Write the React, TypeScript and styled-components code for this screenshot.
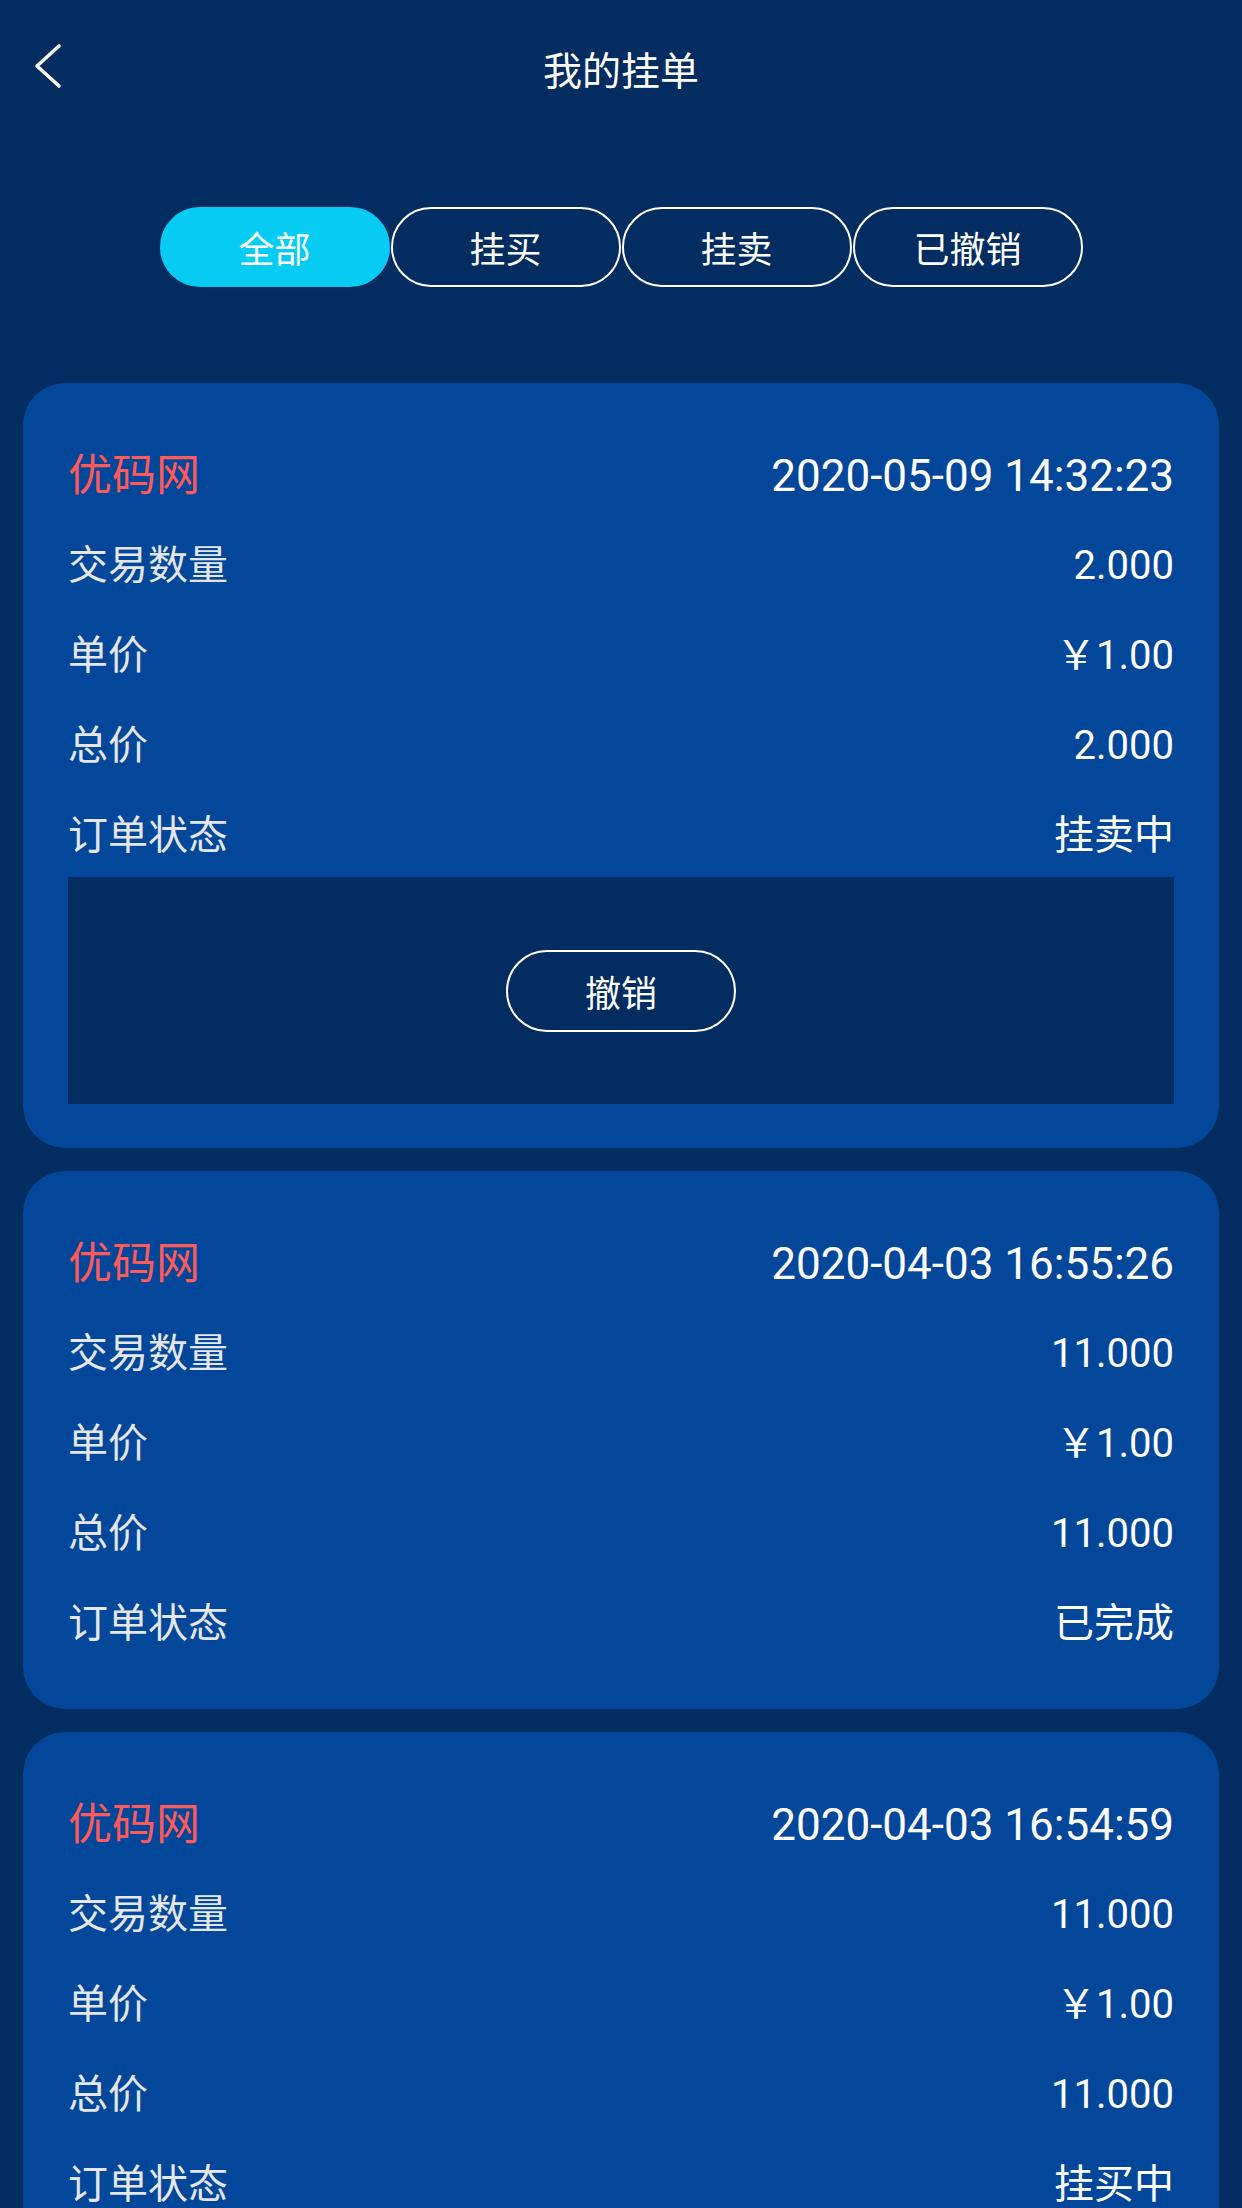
import { FC } from 'react'
import styled, { createGlobalStyle } from 'styled-components'

type Order = {
  time: string
  amount: string
  price: string
  total: string
  status: string
  cancelable?: boolean
}

const orders: Order[] = [
  { time: '2020-05-09 14:32:23', amount: '2.000', price: '￥1.00', total: '2.000', status: '挂卖中', cancelable: true },
  { time: '2020-04-03 16:55:26', amount: '11.000', price: '￥1.00', total: '11.000', status: '已完成' },
  { time: '2020-04-03 16:54:59', amount: '11.000', price: '￥1.00', total: '11.000', status: '挂买中' },
]

const tabs = ['全部', '挂买', '挂卖', '已撤销']

const App: FC = () => (
  <>
    <GlobalStyle />
    <StylePage>
      <StyleHeader>
        <StyleBack aria-label={'back'}>
          <svg width={30} height={46} viewBox={'0 0 30 46'} fill={'none'}>
            <path d={'M27 3 L5 23 L27 43'} stroke={'#fff'} strokeWidth={3.6} strokeLinecap={'round'} strokeLinejoin={'round'} />
          </svg>
        </StyleBack>
        <StyleTitle>{'我的挂单'}</StyleTitle>
        <span />
      </StyleHeader>

      <StyleTabs>
        {tabs.map((t, i) => (
          <StyleTab key={t} $active={i === 0}>
            {t}
          </StyleTab>
        ))}
      </StyleTabs>

      <StyleList>
        {orders.map((o) => (
          <StyleCard key={o.time}>
            <StyleRow>
              <StyleShop>{'优码网'}</StyleShop>
              <StyleTime>{o.time}</StyleTime>
            </StyleRow>
            <StyleRow>
              <StyleLabel>{'交易数量'}</StyleLabel>
              <StyleValue>{o.amount}</StyleValue>
            </StyleRow>
            <StyleRow>
              <StyleLabel>{'单价'}</StyleLabel>
              <StyleValue>{o.price}</StyleValue>
            </StyleRow>
            <StyleRow>
              <StyleLabel>{'总价'}</StyleLabel>
              <StyleValue>{o.total}</StyleValue>
            </StyleRow>
            <StyleRow>
              <StyleLabel>{'订单状态'}</StyleLabel>
              <StyleValue>{o.status}</StyleValue>
            </StyleRow>
            {o.cancelable && (
              <StyleActions>
                <StyleCancel>{'撤销'}</StyleCancel>
              </StyleActions>
            )}
          </StyleCard>
        ))}
      </StyleList>
    </StylePage>
  </>
)

export default App

const GlobalStyle = createGlobalStyle`
  html, body {
    margin: 0;
    padding: 0;
    background: #032c60;
  }
  body {
    font-family: Roboto, "Noto Sans CJK SC", sans-serif;
    color: #fff;
  }
`

const StylePage = styled.div`
  min-height: 2208px;
  background: #032c60;
`

const StyleHeader = styled.header`
  display: grid;
  grid-template-columns: 1fr auto 1fr;
  align-items: center;
  height: 136px;
  padding: 0 32px;
`

const StyleBack = styled.div`
  display: flex;
  align-items: center;
  margin-top: -4px;
`

const StyleTitle = styled.h1`
  margin: 0;
  font-family: "Noto Sans CJK SC", sans-serif;
  font-size: 39px;
  font-weight: 400;
  line-height: 1;
  color: #fff;
`

const StyleTabs = styled.div`
  display: flex;
  justify-content: center;
  gap: 1px;
  margin-top: 71px;
`

const StyleTab = styled.div<{ $active: boolean }>`
  display: flex;
  justify-content: center;
  align-items: center;
  box-sizing: border-box;
  width: 230px;
  height: 80px;
  border-radius: 40px;
  border: 2.5px solid ${(p) => (p.$active ? '#06ccf4' : '#fff')};
  background: ${(p) => (p.$active ? '#06ccf4' : 'transparent')};
  font-family: "Noto Sans CJK SC", sans-serif;
  font-size: 36px;
  color: #fff;
`

const StyleList = styled.div`
  display: flex;
  flex-direction: column;
  gap: 23px;
  margin-top: 96px;
  padding: 0 23px;
`

const StyleCard = styled.section`
  background: #03479a;
  border-radius: 42px;
  padding: 44px 45px;
`

const StyleRow = styled.div`
  display: flex;
  justify-content: space-between;
  align-items: center;
  box-sizing: border-box;
  height: 90px;
  padding-top: 8px;
  line-height: 1;
`

const StyleShop = styled.span`
  font-size: 44px;
  color: #ff5a5a;
`

const StyleTime = styled.span`
  font-size: 44px;
  color: #fff;
`

const StyleLabel = styled.span`
  font-size: 40px;
  color: #e4e6ea;
`

const StyleValue = styled.span`
  font-size: 40px;
  color: #fff;
`

const StyleActions = styled.div`
  display: flex;
  justify-content: center;
  align-items: center;
  height: 227px;
  background: #032c60;
`

const StyleCancel = styled.button`
  box-sizing: border-box;
  width: 230px;
  height: 82px;
  border-radius: 41px;
  border: 2.5px solid #fff;
  background: transparent;
  font-family: "Noto Sans CJK SC", sans-serif;
  font-size: 36px;
  color: #fff;
  padding: 0;
`
